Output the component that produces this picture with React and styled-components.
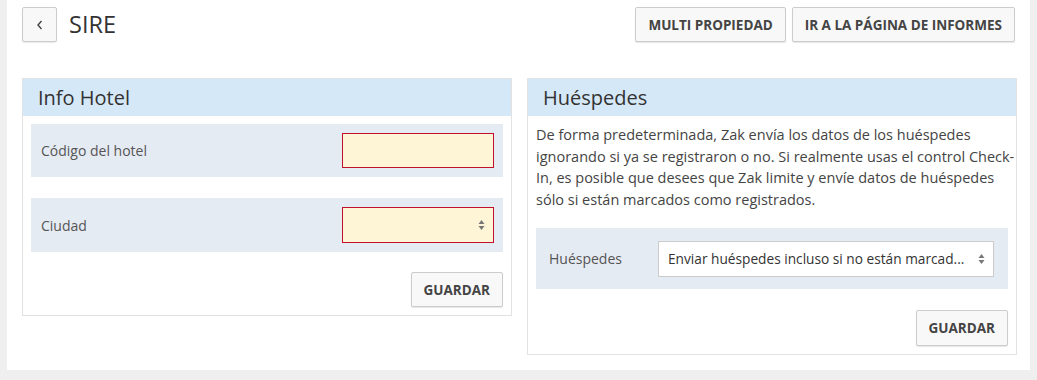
import React from "react";
import styled, { createGlobalStyle } from "styled-components";

const Global = createGlobalStyle`
  html, body { margin: 0; padding: 0; background: #efefef; }
  body { font-family: "Open Sans", "Liberation Sans", sans-serif; color: #333; }
  * { box-sizing: border-box; }
`;

const Page = styled.div`
  margin-left: 7px;
  width: 1023px;
  height: 370px;
  background: #fff;
  padding: 7px 15px 0 15px;
`;

const TopBar = styled.div`
  display: flex;
  align-items: center;
  height: 35px;
`;

const BackButton = styled.button`
  width: 35px;
  height: 35px;
  border: 1px solid #ccc;
  border-radius: 2px;
  background: #f8f8f8;
  box-shadow: 0 1px 1px rgba(0,0,0,0.08);
  display: flex;
  align-items: center;
  justify-content: center;
  padding: 0;
  color: #444;
`;

const Title = styled.h1`
  margin: 0 0 0 12px;
  font-size: 23.5px;
  font-weight: 400;
  color: #333;
  line-height: 35px;
`;

const Actions = styled.div`
  margin-left: auto;
  display: flex;
  gap: 6px;
`;

const Button = styled.button`
  height: ${p => p.$h || 35}px;
  padding: 0 12px;
  border: 1px solid #ccc;
  border-radius: 2px;
  background: #f8f8f8;
  box-shadow: 0 1px 1px rgba(0,0,0,0.1);
  font-family: "Open Sans", "Liberation Sans", sans-serif;
  font-size: 13.5px;
  font-weight: 700;
  color: #444;
  text-transform: uppercase;
  white-space: nowrap;
`;

const Columns = styled.div`
  display: grid;
  grid-template-columns: 490px 490px;
  gap: 15px;
  margin-top: 36px;
  align-items: start;
`;

const Panel = styled.section`
  border: 1px solid #e2e2e2;
  background: #fff;
`;

const PanelHeader = styled.div`
  height: 37px;
  background: #d5e8f7;
  padding: 0 15px;
  display: flex;
  align-items: center;
  font-size: 20px;
  color: #333;
`;

const PanelBody = styled.div`
  padding: 8px;
  display: flex;
  flex-direction: column;
  gap: ${p => p.$gap || 20}px;
`;

const Description = styled.p`
  margin: 0 0 -2px 0;
  font-size: 14.5px;
  line-height: 21.5px;
  color: #444;
  white-space: nowrap;
`;

const FieldRow = styled.div`
  background: #e5ebf3;
  display: flex;
  align-items: center;
  padding: ${p => p.$pad || "9px 9px 9px 10px"};
  min-height: ${p => p.$h || 53}px;
`;

const Label = styled.div`
  font-size: 14px;
  color: #555;
  flex: ${p => (p.$fixed ? `0 0 ${p.$fixed}px` : "1")};
`;

const Input = styled.div`
  position: relative;
  width: ${p => (p.$w ? `${p.$w}px` : "auto")};
  flex: ${p => (p.$w ? "none" : "1")};
  height: ${p => p.$h || 35}px;
  background: ${p => (p.$invalid ? "#fdf5d5" : "#fff")};
  border: 1px solid ${p => (p.$invalid ? "#c0102b" : "#ccc")};
  font-size: 13.7px;
  color: #333;
  display: flex;
  align-items: center;
  padding: 0 24px 0 9px;
  white-space: nowrap;
  overflow: hidden;
`;

const Caret = styled.svg`
  position: absolute;
  right: 8px;
  top: 50%;
  transform: translateY(-50%);
`;

const Footer = styled.div`
  display: flex;
  justify-content: flex-end;
  margin-top: ${p => p.$mt || 0}px;
`;

const Arrows = () => (
  <Caret width="7" height="12" viewBox="0 0 7 12">
    <path d="M3.5 1 L6.5 5 L0.5 5 Z" fill="#777" />
    <path d="M3.5 11 L6.5 7 L0.5 7 Z" fill="#777" />
  </Caret>
);

export default function App() {
  return (
    <>
      <Global />
      <Page>
        <TopBar>
          <BackButton aria-label="Volver">
            <svg width="8" height="12" viewBox="0 0 8 12">
              <path d="M5.5 2 L2 6 L5.5 10" fill="none" stroke="#444" strokeWidth="1.4" />
            </svg>
          </BackButton>
          <Title>SIRE</Title>
          <Actions>
            <Button>Multi propiedad</Button>
            <Button>Ir a la página de informes</Button>
          </Actions>
        </TopBar>
        <Columns>
          <Panel>
            <PanelHeader>Info Hotel</PanelHeader>
            <PanelBody $gap={21}>
              <FieldRow>
                <Label>Código del hotel</Label>
                <Input $w={152} $invalid />
              </FieldRow>
              <FieldRow $h={54} style={{ marginBottom: -1 }}>
                <Label>Ciudad</Label>
                <Input $w={152} $h={36} $invalid>
                  <Arrows />
                </Input>
              </FieldRow>
              <Footer>
                <Button>Guardar</Button>
              </Footer>
            </PanelBody>
          </Panel>
          <Panel>
            <PanelHeader>Huéspedes</PanelHeader>
            <PanelBody $gap={20}>
              <Description>
                De forma predeterminada, Zak envía los datos de los huéspedes
                <br />
                ignorando si ya se registraron o no. Si realmente usas el control Check-
                <br />
                In, es posible que desees que Zak limite y envíe datos de huéspedes
                <br />
                sólo si están marcados como registrados.
              </Description>
              <FieldRow $h={61} $pad="12px 14px 12px 13px">
                <Label $fixed={109}>Huéspedes</Label>
                <Input $h={36}>
                  Enviar huéspedes incluso si no están marcad...
                  <Arrows />
                </Input>
              </FieldRow>
              <Footer $mt={1}>
                <Button $h={36}>Guardar</Button>
              </Footer>
            </PanelBody>
          </Panel>
        </Columns>
      </Page>
    </>
  );
}
